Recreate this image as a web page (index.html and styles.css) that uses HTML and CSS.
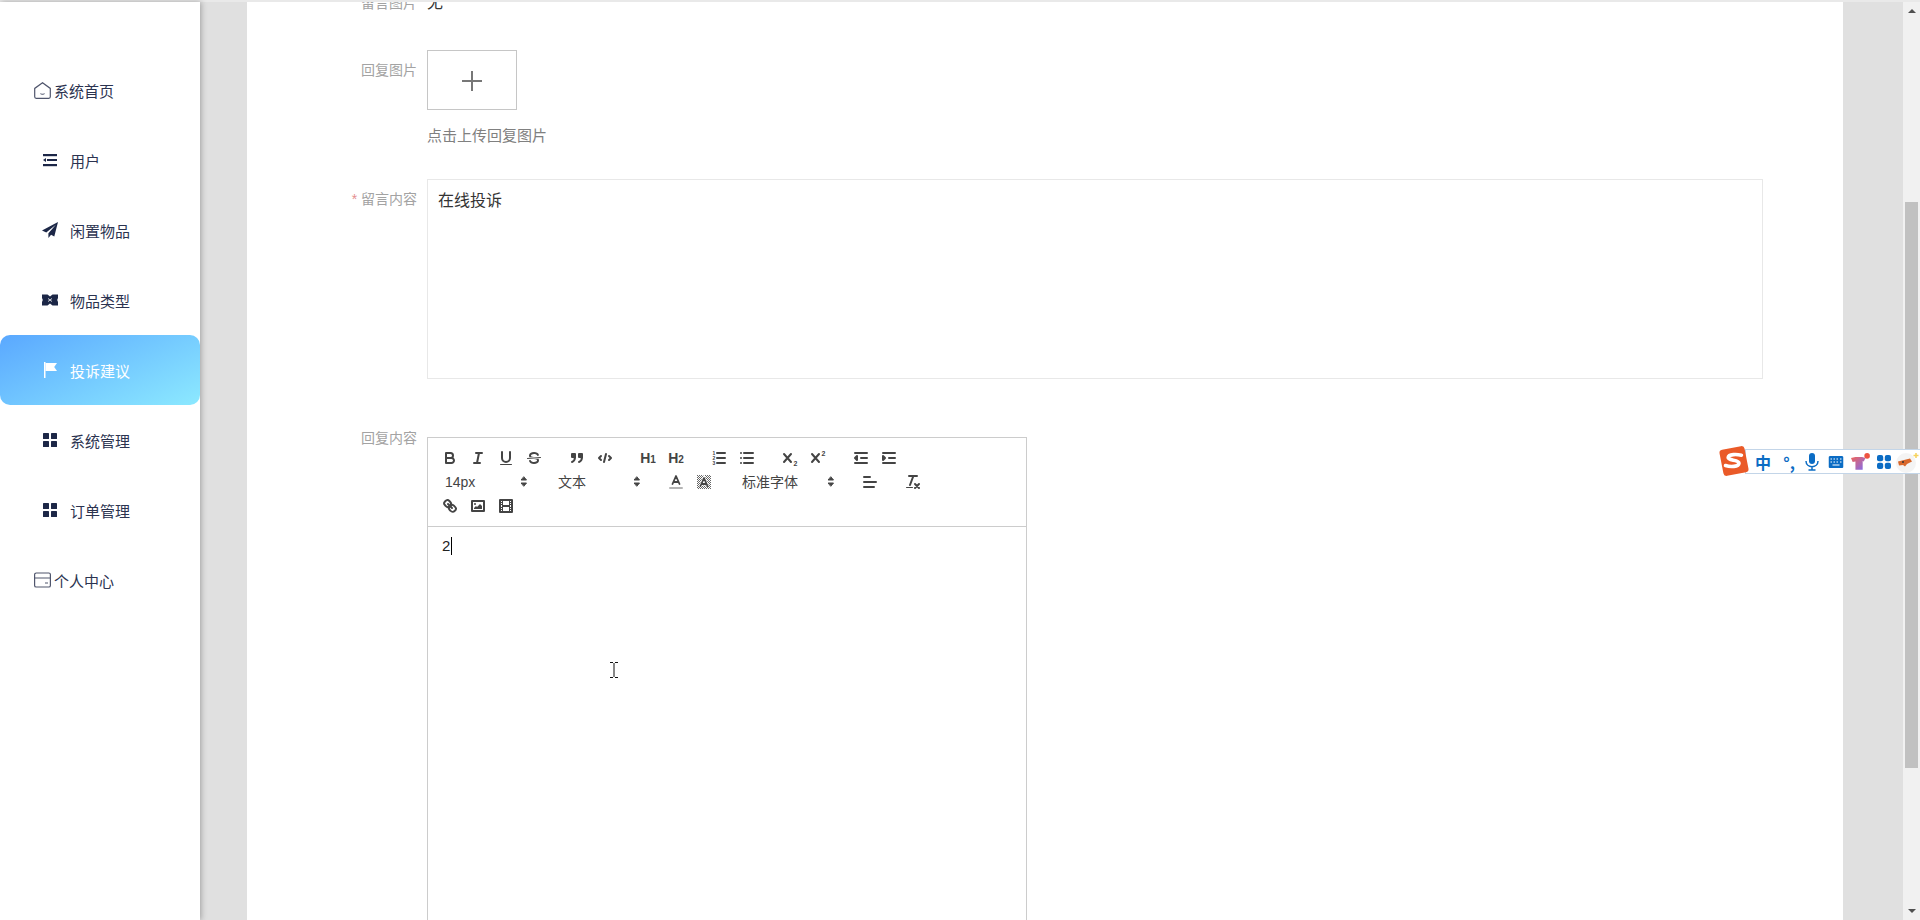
FILE: index.html
```html
<!DOCTYPE html>
<html lang="zh-CN">
<head>
<meta charset="UTF-8">
<meta name="viewport" content="width=device-width, initial-scale=1.0">
<title>投诉建议</title>
<link rel="stylesheet" href="styles.css">
</head>
<body>

<div class="app">

  <!-- Sidebar -->
  <aside class="sidebar">
    <div class="menu-item top-level">
      <svg class="menu-icon-line" width="17" height="17" viewBox="0 0 17 17"><path d="M8.500 .7 .7 6.400v8.400a1.500 1.500 0 0 0 1.500 1.500h12.600a1.500 1.500 0 0 0 1.500-1.500V6.400Z"/><path d="M6.500 11.500c.8 1 3.200 1 4 0"/></svg>
      <span>系统首页</span>
    </div>
    <div class="menu-item">
      <svg class="menu-icon" width="14" height="14" viewBox="0 0 14 14"><rect y="1" width="14" height="2.200"/><rect x="4" y="6" width="10" height="2"/><rect y="11" width="14" height="2.200"/><path d="M3 5v4L0 7Z"/></svg>
      <span>用户</span>
    </div>
    <div class="menu-item">
      <svg class="menu-icon wide-icon" width="16" height="16" viewBox="0 0 15 15"><path d="M15 0 0 8l4 1.800L13 2.500 6 10.500V15l2.500-3 3 1.500Z"/></svg>
      <span>闲置物品</span>
    </div>
    <div class="menu-item">
      <svg class="menu-icon wide-icon" width="16" height="12" viewBox="0 0 16 12"><path d="M0 .5h5.500L8 2.500 10.500.5H16v3.500L15.200 6l.8 2v3.500h-5.500L8 9.500l-2.500 2H0V8L.8 6 0 4Z"/><path d="M6 4.500 10 7.500M10 4.500 6 7.500" stroke="#fff" stroke-width=".8"/></svg>
      <span>物品类型</span>
    </div>
    <div class="menu-item active">
      <svg class="menu-icon" width="14" height="16" viewBox="0 0 14 16"><path d="M1 0h1.500v16H1Z"/><path d="M2.500 1H14l-2.800 4L14 9H2.500Z"/></svg>
      <span>投诉建议</span>
    </div>
    <div class="menu-item">
      <svg class="menu-icon" width="14" height="14" viewBox="0 0 14 14"><rect width="6" height="6" rx=".6"/><rect x="8" width="6" height="6" rx=".6"/><rect y="8" width="6" height="6" rx=".6"/><rect x="8" y="8" width="6" height="6" rx=".6"/></svg>
      <span>系统管理</span>
    </div>
    <div class="menu-item">
      <svg class="menu-icon" width="14" height="14" viewBox="0 0 14 14"><rect width="6" height="6" rx=".6"/><rect x="8" width="6" height="6" rx=".6"/><rect y="8" width="6" height="6" rx=".6"/><rect x="8" y="8" width="6" height="6" rx=".6"/></svg>
      <span>订单管理</span>
    </div>
    <div class="menu-item top-level">
      <svg class="menu-icon-line" width="17" height="16" viewBox="0 0 17 16"><rect x=".6" y="1" width="15.800" height="14" rx="1.600"/><path d="M.6 6h15.800M11 11h3"/></svg>
      <span>个人中心</span>
    </div>
  </aside>

  <!-- Main -->
  <main class="main">
    <div class="card">

      <div class="form-row clipped-row">
        <label class="form-label">留言图片</label>
        <div class="form-text">无</div>
      </div>

      <div class="form-row upload-row">
        <label class="form-label">回复图片</label>
        <div>
          <div class="upload-box">
            <svg width="20" height="20" viewBox="0 0 20 20"><path d="M10 0v20M0 10h20"/></svg>
          </div>
          <p class="upload-hint">点击上传回复图片</p>
        </div>
      </div>

      <div class="form-row content-row">
        <label class="form-label"><span class="required">*</span> 留言内容</label>
        <div class="readonly-box">在线投诉</div>
      </div>

      <div class="form-row">
        <label class="form-label">回复内容</label>
        <div class="editor">
          <div class="toolbar">

            <div class="toolbar-row">
              <span class="formats">
                <button><svg viewBox="0 0 18 18"><path class="st" d="M5,4H9.500A2.500,2.500,0,0,1,12,6.500v0A2.500,2.500,0,0,1,9.500,9H5V4Z"/><path class="st" d="M5,9h5.500A2.500,2.500,0,0,1,13,11.500v0A2.500,2.500,0,0,1,10.500,14H5V9Z"/></svg></button>
                <button><svg viewBox="0 0 18 18"><path class="st" d="M7 4h6M5 14h6M8 14l2-10"/></svg></button>
                <button><svg viewBox="0 0 18 18"><path class="st" d="M5,3V9a4,4,0,0,0,4,4h0a4,4,0,0,0,4-4V3"/><rect class="fl" height="1" rx=".5" width="12" x="3" y="15"/></svg></button>
                <button><svg viewBox="0 0 18 18"><path class="st thin" d="M15.500 8.500 2.500 9.500"/><path class="fl" d="M9,8C6.500,7.800,6,7.500,6,6.500,6,5.800,7.300,5,9,5c1.600,0,2.800.7,3,1.300a1,1,0,0,0,1.900-.6C13.400,4.100,11.400,3,9,3,6.200,3,4,4.500,4,6.500a3.200,3.200,0,0,0,.5,1.800Z"/><path class="fl" d="M9,10c2.500.2,3,.5,3,1.500,0,.7-1.300,1.500-3,1.500-1.600,0-2.800-.7-3-1.300a1,1,0,1,0-1.900.6C4.600,13.900,6.600,15,9,15c2.800,0,5-1.500,5-3.500a3.200,3.200,0,0,0-.5-1.800Z"/></svg></button>
              </span>
              <span class="formats">
                <button><svg viewBox="0 0 18 18"><rect class="fl st" height="3" width="3" x="4" y="5"/><rect class="fl st" height="3" width="3" x="11" y="5"/><path class="st" d="M7,8c0,4-3,5-3,5"/><path class="st" d="M14,8c0,4-3,5-3,5"/></svg></button>
                <button><svg viewBox="0 0 18 18"><path class="st" d="M5 7 3 9l2 2M13 7l2 2-2 2M10 5 8 13"/></svg></button>
              </span>
              <span class="formats">
                <button class="head-btn">H<small>1</small></button>
                <button class="head-btn">H<small>2</small></button>
              </span>
              <span class="formats">
                <button><svg viewBox="0 0 18 18"><path class="st" d="M7 4h8M7 9h8M7 14h8"/><text class="list-num" x="2.500" y="6">1</text><text class="list-num" x="2.500" y="11">2</text><text class="list-num" x="2.500" y="16">3</text></svg></button>
                <button><svg viewBox="0 0 18 18"><path class="st" d="M6 4h9M6 9h9M6 14h9M3 4h0M3 9h0M3 14h0"/></svg></button>
              </span>
              <span class="formats">
                <button><svg viewBox="0 0 18 18"><path class="st" d="M3 5l7 8M10 5l-7 8"/><text class="script-num" x="12.500" y="16.500">2</text></svg></button>
                <button><svg viewBox="0 0 18 18"><path class="st" d="M3 5l7 8M10 5l-7 8"/><text class="script-num" x="12.500" y="6.500">2</text></svg></button>
              </span>
              <span class="formats">
                <button><svg viewBox="0 0 18 18"><path class="st" d="M3 14h12M3 4h12M9 9h6"/><path class="fl st" d="M5 7v4L3 9Z"/></svg></button>
                <button><svg viewBox="0 0 18 18"><path class="st" d="M3 14h12M3 4h12M9 9h6"/><path class="fl st" d="M3 7v4l2-2Z"/></svg></button>
              </span>
            </div>

            <div class="toolbar-row">
              <span class="formats">
                <span class="picker">14px<svg viewBox="0 0 18 18"><path class="st thin fl" d="M6.500 10h5L9 13ZM6.500 7h5L9 4Z"/></svg></span>
              </span>
              <span class="formats">
                <span class="picker"><span class="picker-cjk">文本</span><svg viewBox="0 0 18 18"><path class="st thin fl" d="M6.500 10h5L9 13ZM6.500 7h5L9 4Z"/></svg></span>
              </span>
              <span class="formats">
                <button><svg viewBox="0 0 18 18"><path class="st faint" d="M3 15h12"/><path class="st thin-a" d="M5.500 11 9 3l3.500 8M11.600 9H6.400"/></svg></button>
                <button><svg viewBox="0 0 18 18"><defs><pattern id="hatch" width="2" height="2" patternUnits="userSpaceOnUse"><rect width="1" height="1" fill="#666"/><rect x="1" y="1" width="1" height="1" fill="#666"/></pattern></defs><rect x="2" y="2" width="14" height="14" fill="url(#hatch)"/><path class="halo" d="M5.500 13 9 5l3.500 8M11.600 11H6.400"/><path class="st thin-a" d="M5.500 13 9 5l3.500 8M11.600 11H6.400"/></svg></button>
              </span>
              <span class="formats">
                <span class="picker picker-font"><span class="picker-cjk">标准字体</span><svg viewBox="0 0 18 18"><path class="st thin fl" d="M6.500 10h5L9 13ZM6.500 7h5L9 4Z"/></svg></span>
              </span>
              <span class="formats">
                <button><svg viewBox="0 0 18 18"><path class="st" d="M3 9h12M3 14h10M3 4h6"/></svg></button>
              </span>
              <span class="formats">
                <button><svg viewBox="0 0 18 18"><path class="st" d="M5 3h8M6 12 9.350 3M11 11l4 4M15 11l-4 4"/><rect class="fl" height="1" rx=".5" width="7" x="2" y="14"/></svg></button>
              </span>
            </div>

            <div class="toolbar-row">
              <span class="formats">
                <button><svg viewBox="0 0 18 18"><path class="st" d="M7 7l4 4"/><path class="st" d="M8.900,4.600a3.500,3.500,0,0,1,.4,4.700A3.500,3.500,0,0,1,4.600,8.900C3.200,7.500,2,6.400,4.200,4.200S7.500,3.200,8.900,4.600Z"/><path class="st" d="M13.400,9.100a3.500,3.500,0,0,0-4.700-.4,3.500,3.500,0,0,0,.4,4.700c1.400,1.400,2.500,2.500,4.700.4S14.800,10.500,13.400,9.100Z"/></svg></button>
                <button><svg viewBox="0 0 18 18"><rect class="st" height="10" width="12" x="3" y="4"/><circle class="fl" cx="6" cy="7" r="1"/><path class="fl" d="M5 12v-1l2-2 1 1 3-3 2 2v3Z"/></svg></button>
                <button><svg viewBox="0 0 18 18"><rect class="st" height="12" width="12" x="3" y="3"/><path class="fl" d="M5 3h1v12H5ZM12 3h1v12h-1ZM5 8h8v2H5ZM3 5h3v1H3ZM3 7h3v1H3ZM3 10h3v1H3ZM3 12h3v1H3ZM12 5h3v1h-3ZM12 7h3v1h-3ZM12 10h3v1h-3ZM12 12h3v1h-3Z"/></svg></button>
              </span>
            </div>

          </div>
          <div class="editor-body"><span class="caret">2</span></div>
        </div>
      </div>

    </div>
  </main>

  <!-- Scrollbar -->
  <div class="scrollbar">
    <span class="arrow-up"></span>
    <span class="scroll-thumb"></span>
    <span class="arrow-down"></span>
  </div>
</div>

<!-- I-beam mouse pointer -->
<svg class="ibeam" width="8" height="16" viewBox="0 0 8 16"><path d="M0 .5h3M5 .5h3M4 1v14M0 15.500h3M5 15.500h3"/></svg>

<!-- Floating input method bar -->
<div class="ime-bar">
  <svg class="ime-logo" width="32" height="34" viewBox="0 0 30 32">
    <rect x="3" y="3.500" width="24" height="25" rx="3" transform="rotate(-11 15 16)" fill="#ea5a28"/>
    <path d="M22 10.500c-4-.8-12-1.300-12.500 2.200-.4 3.200 10.500 1.800 10.200 5.400-.3 3.500-8.200 3.600-12.700 2.200" fill="none" stroke="#fff" stroke-width="3.400" stroke-linecap="round"/>
  </svg>
  <span class="ime-item ime-zh">中</span>
  <span class="ime-item ime-punct">°,</span>
  <svg class="ime-item" width="14" height="18" viewBox="0 0 14 18"><rect x="4" y="0" width="6" height="11" rx="3" fill="#0b6cc4"/><path d="M1 8c0 7.500 12 7.500 12 0M7 13.500V17M3.500 17h7" fill="none" stroke="#0b6cc4" stroke-width="1.500"/></svg>
  <svg class="ime-item" width="15" height="12" viewBox="0 0 15 12"><rect width="15" height="12" rx="1.500" fill="#0b6cc4"/><path d="M2 3h1.500M5 3h1.500M8 3h1.500M11.500 3H13M2 6h1.500M5 6h1.500M8 6h1.500M11.500 6H13M4 9h7" stroke="#fff" stroke-width="1.200"/></svg>
  <svg class="ime-item" width="20" height="18" viewBox="0 0 18 16"><defs><linearGradient id="shirt" x1="0" y1="0" x2="1" y2="1"><stop offset="0" stop-color="#f0645a"/><stop offset="1" stop-color="#7f6cf0"/></linearGradient></defs><path d="M0 4.500 4 3.500h6l3 1-1.500 3-1-.4V15H4V7.500L1.500 8Z" fill="url(#shirt)"/><circle cx="14.500" cy="2.500" r="2.500" fill="#ee5340"/></svg>
  <svg class="ime-item" width="14" height="14" viewBox="0 0 14 14"><rect width="6.200" height="6.200" rx="2" fill="#0b6cc4"/><rect x="7.800" width="6.200" height="6.200" rx="2" fill="#0b6cc4"/><rect y="7.800" width="6.200" height="6.200" rx="2" fill="#0b6cc4"/><rect x="7.800" y="7.800" width="6.200" height="6.200" rx="2" fill="#0b6cc4"/></svg>
  <svg class="ime-item ime-face" width="24" height="22" viewBox="0 0 24 22"><circle cx="11" cy="12" r="10" fill="#f4f4f4"/><path d="M3 10.500 15 7.500l2 3-5 2.500-2 2.500-2-1.500-4 .5Z" fill="#d9682c"/><circle cx="8" cy="11" r="1" fill="#333"/><path d="M21 2v5M18.500 4.500h5" stroke="#f6d25c" stroke-width="1.500"/></svg>
</div>

</body>
</html>
```

FILE: styles.css
```css
/* Basic Reset */
* {
  box-sizing: border-box;
  margin: 0;
  padding: 0;
}

body {
  height: 920px;
  overflow: hidden;
  background: #fff;
  font-family: "Liberation Sans", "Noto Sans CJK SC", sans-serif;
}

.app {
  display: flex;
  height: 920px;
  border-top: 2px solid #e9e9e9;
}

/* Sidebar */
.sidebar {
  position: relative;
  z-index: 1;
  flex: 0 0 200px;
  padding-top: 53px;
  background: #fff;
  box-shadow: 1px 0 6px rgba(0, 0, 0, 0.3);
}

.menu-item {
  display: flex;
  align-items: center;
  gap: 13px;
  height: 70px;
  padding-left: 43px;
  font-size: 15px;
  color: #2b3350;
}

.menu-item.top-level {
  gap: 3px;
  padding-left: 34px;
}

.menu-icon {
  flex: none;
  fill: #1c2747;
}

.wide-icon {
  margin: 0 -1px;
}

.menu-icon-line {
  flex: none;
  fill: none;
  stroke: #50566d;
  stroke-width: 1.2;
}

.menu-item.active {
  border-radius: 10px;
  background: linear-gradient(155deg, #5aa8ff, #8ce9ff);
  color: #fff;
}

.menu-item.active .menu-icon {
  fill: #fff;
}

/* Main */
.main {
  flex: 1;
  min-width: 0;
  padding: 0 60px 0 47px;
  background: #e0e0e0;
  overflow: hidden;
}

.card {
  height: 100%;
  padding-right: 80px;
  background: #fff;
}

.form-row {
  display: flex;
  gap: 10px;
}

.form-label {
  flex: 0 0 170px;
  font-size: 14px;
  line-height: 40px;
  text-align: right;
  color: #a3a3a3;
}

.required {
  color: #e58f8f;
}

.clipped-row {
  height: 21px;
  align-items: flex-end;
  overflow: hidden;
  margin-bottom: 27px;
}

.form-text {
  font-size: 16px;
  line-height: 40px;
  color: #333;
}

.upload-row {
  margin-bottom: 23px;
}

.upload-box {
  display: flex;
  align-items: center;
  justify-content: center;
  width: 90px;
  height: 60px;
  padding-top: 2px;
  border: 1px solid #c6c6c6;
}

.upload-box svg {
  stroke: #777;
  stroke-width: 2;
}

.upload-hint {
  margin-top: 6px;
  font-size: 15px;
  line-height: 40px;
  color: #808080;
}

.content-row {
  margin-bottom: 39px;
}

.readonly-box {
  flex: 1;
  height: 200px;
  padding: 9px 10px;
  border: 1px solid #e8e8e8;
  font-size: 16px;
  line-height: 24px;
  color: #333;
}

/* Editor */
.editor {
  width: 600px;
  height: 600px;
  margin-top: 19px;
  border: 1px solid #ccc;
}

.toolbar {
  padding: 8px;
  border-bottom: 1px solid #ccc;
}

.toolbar-row {
  display: flex;
  height: 24px;
}

.formats {
  display: flex;
  margin-right: 15px;
}

.toolbar button {
  width: 28px;
  height: 24px;
  padding: 3px 5px;
  border: none;
  background: none;
  color: #444;
}

.toolbar svg {
  display: block;
  width: 18px;
  height: 18px;
}

.st {
  fill: none;
  stroke: #444;
  stroke-width: 2;
  stroke-linecap: round;
  stroke-linejoin: round;
}

.fl {
  fill: #444;
}

.st.fl {
  fill: #444;
}

.st.thin {
  stroke-width: 1;
}

.st.thin-a {
  stroke-width: 1.8;
}

.st.faint {
  stroke-opacity: 0.4;
}

.halo {
  fill: none;
  stroke: #fff;
  stroke-width: 3;
}

.toolbar .head-btn {
  padding: 3px 0;
  font-family: "Liberation Sans", sans-serif;
  font-size: 14px;
  font-weight: bold;
  line-height: 18px;
}

.head-btn small {
  font-size: 10px;
}

.list-num {
  font-size: 5px;
  font-weight: bold;
  fill: #444;
}

.script-num {
  font-size: 7px;
  font-weight: bold;
  fill: #444;
}

.picker {
  display: flex;
  align-items: center;
  justify-content: space-between;
  width: 98px;
  height: 24px;
  padding: 0 1px 0 9px;
  font-size: 14px;
  color: #444;
}

.picker-cjk {
  margin-top: -2px;
}

.picker-font {
  width: 108px;
}

.editor-body {
  padding: 9px 14px;
  font-size: 15px;
  line-height: 20px;
  color: #222;
}

.caret {
  display: inline-block;
  padding-right: 1px;
  border-right: 1px solid #000;
  line-height: 18px;
}

/* Scrollbar */
.scrollbar {
  display: flex;
  flex: 0 0 17px;
  flex-direction: column;
  align-items: center;
  background: #f1f1f1;
}

.arrow-up {
  margin-top: 7px;
  border: 4px solid transparent;
  border-top: none;
  border-bottom: 4px solid #505050;
}

.scroll-thumb {
  width: 13px;
  height: 566px;
  margin-top: 189px;
  background: #c1c1c1;
}

.arrow-down {
  margin-top: auto;
  margin-bottom: 7px;
  border: 4px solid transparent;
  border-bottom: none;
  border-top: 4px solid #505050;
}

/* Pointer over the editor */
.ibeam {
  position: absolute;
  left: 610px;
  top: 662px;
  fill: none;
  stroke: #111;
}

/* Input method bar */
.ime-bar {
  position: absolute;
  left: 1745px;
  top: 449px;
  z-index: 2;
  width: 175px;
  height: 25px;
  border: 1px solid #c3d5e8;
  border-right: none;
  background: #fff;
  font-family: "Noto Sans CJK SC", sans-serif;
}

.ime-logo {
  position: absolute;
  left: -28px;
  top: -6px;
}

.ime-item {
  position: absolute;
  top: 50%;
  transform: translate(-50%, -50%);
}

.ime-zh {
  left: 17px;
  font-size: 16px;
  font-weight: bold;
  color: #0b6cc4;
}

.ime-punct {
  left: 43px;
  font-size: 16px;
  font-weight: bold;
  color: #0b6cc4;
}

.ime-bar svg:nth-of-type(2) {
  left: 66px;
}

.ime-bar svg:nth-of-type(3) {
  left: 90px;
}

.ime-bar svg:nth-of-type(4) {
  left: 115px;
}

.ime-bar svg:nth-of-type(5) {
  left: 138px;
}

.ime-bar svg:nth-of-type(6) {
  left: 161px;
}
```
